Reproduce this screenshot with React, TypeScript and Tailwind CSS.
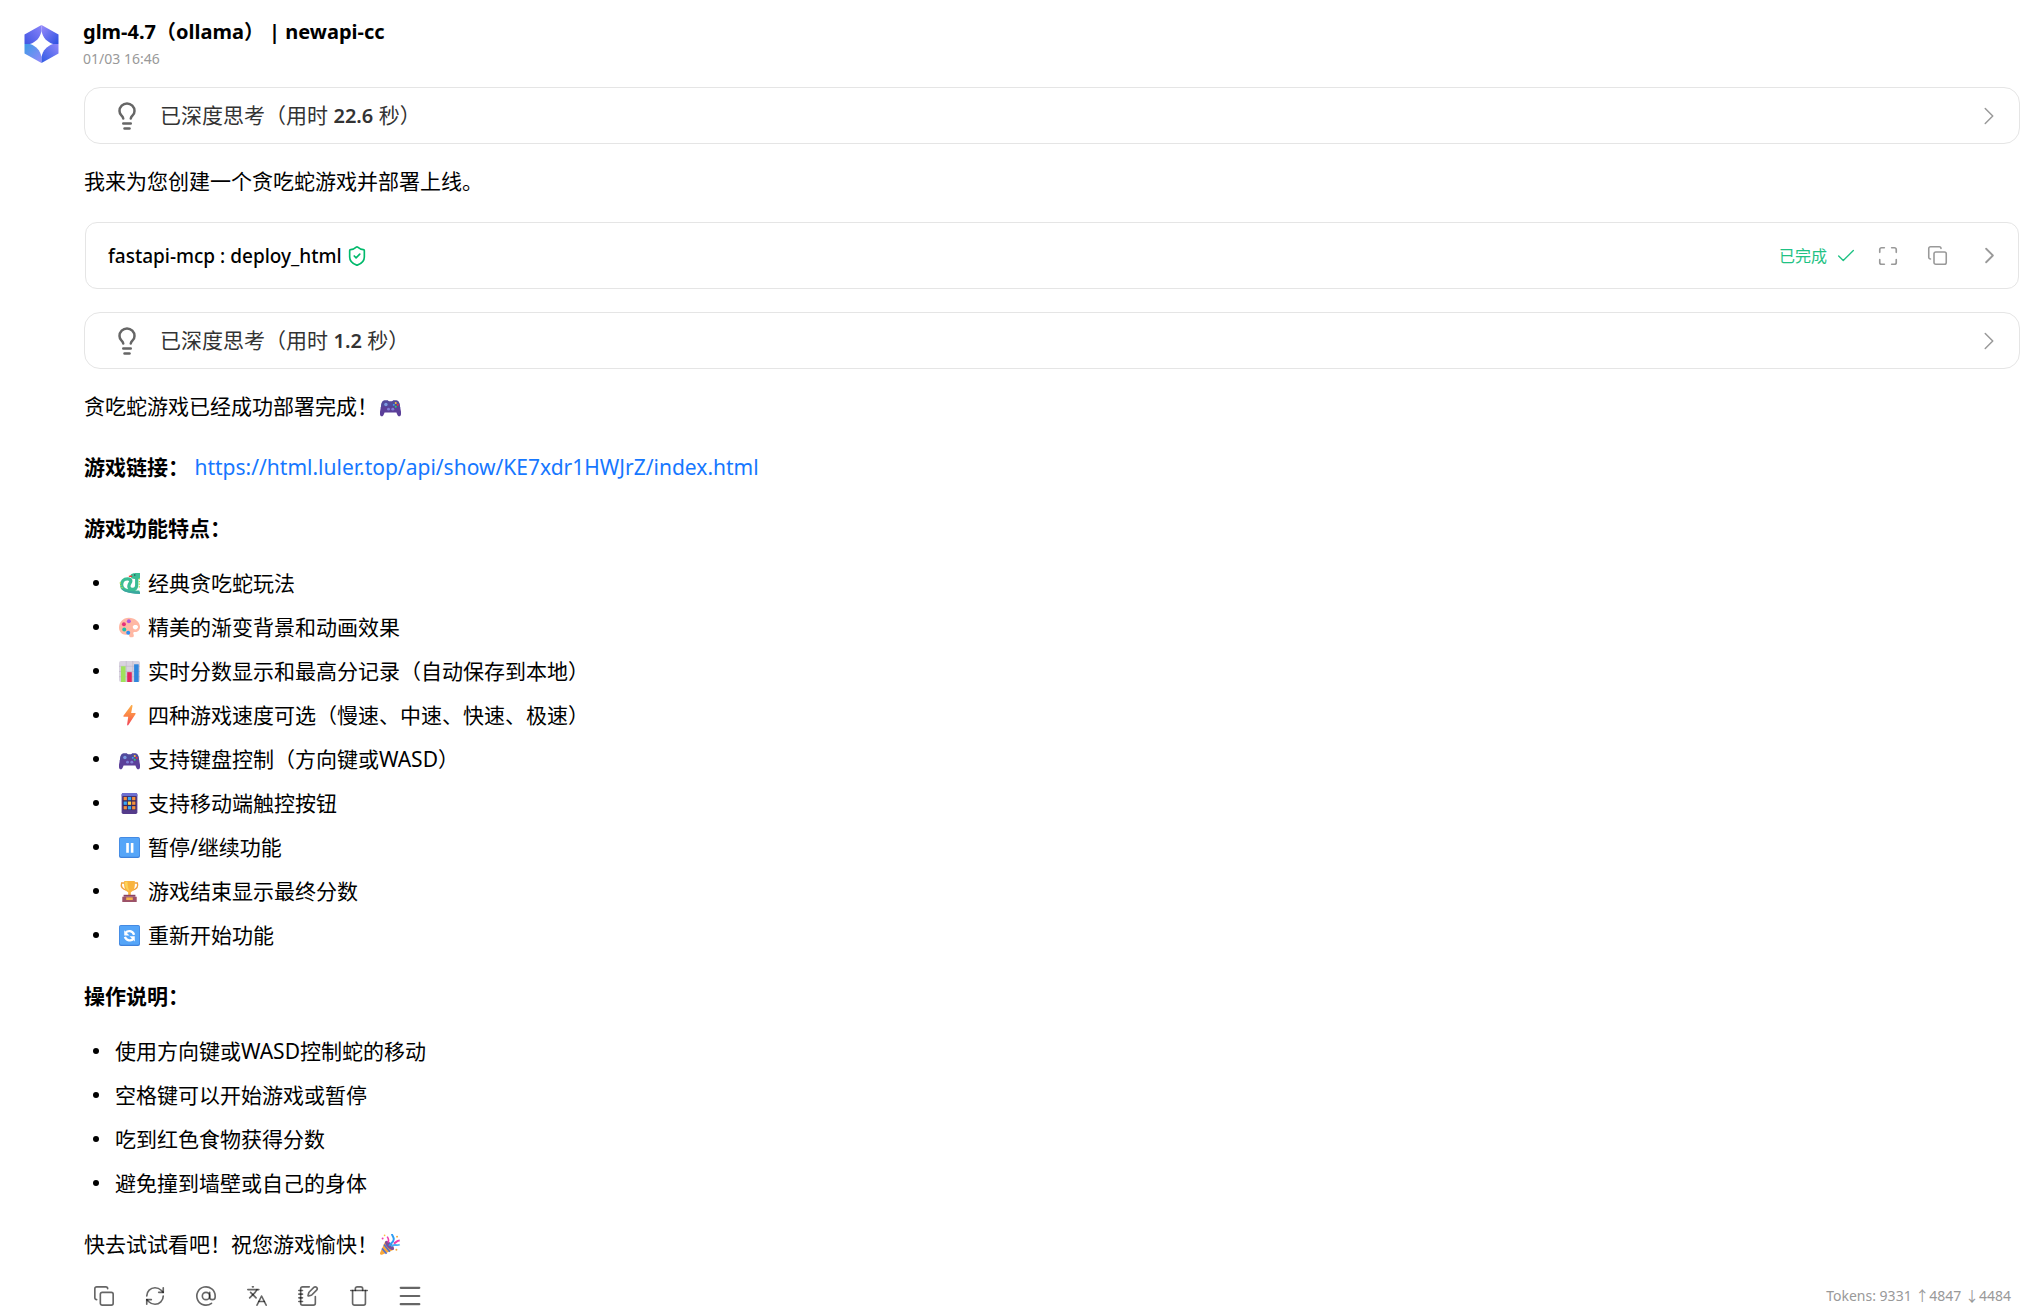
import type { ReactNode } from "react";
import {
  AtSign,
  Check,
  ChevronRight,
  Copy,
  Languages,
  Lightbulb,
  Maximize,
  Menu,
  NotebookPen,
  RefreshCw,
  ShieldCheck,
  Trash,
} from "lucide-react";

function Emoji({ label, children }: { label: string; children: ReactNode }) {
  return (
    <svg viewBox="0 0 32 32" role="img" aria-label={label} className="h-[21px] w-[21px] shrink-0">
      {children}
    </svg>
  );
}

function GamepadEmoji() {
  return (
    <Emoji label="gamepad">
      <path d="M7 7h5l1.500 1.500h5L20 7h5c2.500 0 4 2 4.800 5L32 24c.5 4-.5 7-2.500 7-2 0-3-2-4.500-6H7c-1.500 4-2.500 6-4.500 6C.5 31-.5 28 0 24L2.200 12C3 9 4.500 7 7 7Z" fill="#5b3f99" />
      <path d="M1 19l1.200-7C3 9 4.500 7 7 7h5l1.500 1.500h5L20 7h5c2.500 0 4 2 4.800 5l1.200 7c-2-5-9-3-15-3S3 14 1 19Z" fill="#514a9c" />
      <circle cx="9" cy="13" r="2.600" fill="#7c9ae0" />
      <circle cx="13" cy="20" r="2.200" fill="#7f7fd8" />
      <circle cx="19.500" cy="20" r="2.200" fill="#7f7fd8" />
      <circle cx="24" cy="10.500" r="1.500" fill="#f9c23c" />
      <circle cx="21" cy="13.500" r="1.500" fill="#3fa9f5" />
      <circle cx="27" cy="13.500" r="1.500" fill="#f8312f" />
      <circle cx="24" cy="16.500" r="1.500" fill="#2ecc71" />
    </Emoji>
  );
}

function SnakeEmoji() {
  return (
    <Emoji label="snake">
      <path d="M27 5v13c0 5-2 7-6 7s-6-2-6-5c0-4 3-5 3-8 0-2-2-3-5-3-6 0-9 4-9 9 0 7 8 11 27 11" fill="none" stroke="#3bbd94" strokeWidth="5" />
      <path d="M17 4c2-4 7-4 11-4h4v9h-8c-4 0-6-2-7-5Z" fill="#3bbd94" />
      <path d="M2 22c3 6 12 9 30 10v-4c-15 0-24-1-30-6Z" fill="#3ba6a0" />
      <path d="M31 8v14M2 14c0 4 1 7 4 10" stroke="#b6dc52" strokeWidth="2" strokeDasharray="2 2" fill="none" />
      <path d="m20 5-5 0" stroke="#f8312f" strokeWidth="2" />
      <circle cx="24" cy="3" r="1" fill="#234" />
    </Emoji>
  );
}

function PaletteEmoji() {
  return (
    <Emoji label="palette">
      <path d="M15 1C6 1 0 8 0 16c0 7 5 11 10 11 3 0 4-2 5 0s0 4 5 4c3 0 3-3 2-5s0-3 3-3c5 0 7-4 7-8C32 7 24 1 15 1Zm10 11c2 0 4 1 4 3s-2 4-4 4-4-1-4-4c0-2 2-3 4-3Z" fill="#ffb8a4" fillRule="evenodd" />
      <circle cx="15" cy="6.500" r="3" fill="#b256e0" />
      <circle cx="7.500" cy="11" r="3" fill="#e6307c" />
      <circle cx="8" cy="19" r="3" fill="#1fbfa8" />
      <circle cx="14" cy="24" r="3" fill="#2f8ff0" />
    </Emoji>
  );
}

function ChartEmoji() {
  return (
    <Emoji label="chart">
      <rect width="32" height="32" rx="3" fill="#d9d3e0" />
      <path d="M0 8h32M0 16h32M0 24h32M11 0v32M21 0v32" stroke="#bdb6c8" />
      <rect x="3" y="8" width="7" height="24" fill="#9fe25c" />
      <rect x="12.500" y="17" width="7" height="15" fill="#e2265e" />
      <rect x="23" y="5" width="7" height="27" fill="#2f86dc" />
    </Emoji>
  );
}

function BoltEmoji() {
  return (
    <Emoji label="bolt">
      <defs>
        <linearGradient id="bolt" x1="0" y1="0" x2="0" y2="1">
          <stop offset="0" stopColor="#fcb04a" />
          <stop offset=".55" stopColor="#fb8148" />
          <stop offset="1" stopColor="#f0415a" />
        </linearGradient>
      </defs>
      <path d="M18 1c1-2 3-1 2.500 1L18.500 12H24c1.500 0 2 1 1 2L14.500 30c-1 2-2.500 1-2 -1l1.500-11H8c-1.500 0-1.500-1-1-2Z" fill="url(#bolt)" />
    </Emoji>
  );
}

function PhoneEmoji() {
  return (
    <Emoji label="phone">
      <rect x="4" width="24" height="32" rx="2.500" fill="#553c8b" />
      <path d="M4 5V2.500C4 1 5 0 6.500 0h19C27 0 28 1 28 2.500V5Z" fill="#6d6fd0" />
      <rect x="6" y="5" width="20" height="21" fill="#35285e" />
      <g fill="#f7913d">
        <rect x="7" y="6" width="5" height="5" />
        <rect x="20" y="6" width="5" height="5" />
        <rect x="13.500" y="13" width="5" height="5" fill="#ffd347" />
        <rect x="7" y="20" width="5" height="5" />
        <rect x="20" y="20" width="5" height="5" />
      </g>
      <g fill="#38a9f5">
        <rect x="13.500" y="6" width="5" height="5" />
        <rect x="7" y="13" width="5" height="5" />
        <rect x="20" y="13" width="5" height="5" fill="#f7913d" />
        <rect x="13.500" y="20" width="5" height="5" />
      </g>
    </Emoji>
  );
}

function KeycapBase() {
  return (
    <>
      <rect width="32" height="32" rx="3" fill="#3f82dc" />
      <rect x="1" y="1" width="30" height="29" rx="2.500" fill="#55a5f8" />
    </>
  );
}

function PauseEmoji() {
  return (
    <Emoji label="pause">
      <KeycapBase />
      <path d="M11 9h4v15h-4zM18 9h4v15h-4z" fill="#fff" />
    </Emoji>
  );
}

function RestartEmoji() {
  return (
    <Emoji label="restart">
      <KeycapBase />
      <path d="M10 12c3-4 11-4 13 3M22 21c-3 4-11 3-13-3" fill="none" stroke="#fff" strokeWidth="3.500" />
      <path d="M8 8v8h8zM24 25v-8h-8z" fill="#fff" />
    </Emoji>
  );
}

function TrophyEmoji() {
  return (
    <Emoji label="trophy">
      <path d="M9 3H4c-2 6 1 9 7 11M23 3h5c2 6-1 9-7 11" fill="none" stroke="#f0a03c" strokeWidth="2" />
      <path d="M8 0h16c1 9-1 15-6 17v5h-4v-5C9 15 7 9 8 0Z" fill="#f9b43f" />
      <path d="M9 1h4c0 7 1 11 3 14C11 14 9 8 9 1Z" fill="#fdd259" />
      <path d="M7 21h18v3H7z" fill="#8a4463" />
      <path d="M5 24h22v8H5z" fill="#9c5268" />
      <rect x="11" y="25" width="10" height="4" fill="#f6b24a" />
    </Emoji>
  );
}

function PartyEmoji() {
  return (
    <Emoji label="party">
      <path d="M8 11 0 29c-.5 2 1 3 3 2.500L21 24Z" fill="#f9a83a" />
      <path d="m6 16 9 11M3 22l7 8" stroke="#4e6fd0" strokeWidth="2.500" />
      <ellipse cx="14.500" cy="17.500" rx="4" ry="9" transform="rotate(-44 14.500 17.500)" fill="#7b4f9c" />
      <path d="M14 18c2-4 7-5 7-10 0-3-2-5-3-8" fill="none" stroke="#2f9df4" strokeWidth="3" />
      <path d="M17 19c4-5 8 0 13-3" fill="none" stroke="#4ab0f5" strokeWidth="3" />
      <path d="M21 14c3 0 4-4 9-4" fill="none" stroke="#ee3fae" strokeWidth="3" />
      <path d="M12 13c2-3 1-6-1-9" fill="none" stroke="#ee3fae" strokeWidth="2.500" />
      <circle cx="4" cy="7" r="1.500" fill="#ee3fae" />
      <circle cx="26" cy="4" r="1.500" fill="#f9a83a" />
      <circle cx="25" cy="24" r="1.500" fill="#f9a83a" />
      <circle cx="7" cy="2" r="1.300" fill="#f9c23c" />
    </Emoji>
  );
}

function Avatar() {
  return (
    <svg viewBox="0 0 36 40" role="img" aria-label="glm" className="mt-6 h-10 w-9 shrink-0">
      <defs>
        <linearGradient id="a1" x1="0" y1="1" x2="1" y2="0">
          <stop offset="0" stopColor="#3f55e2" />
          <stop offset="1" stopColor="#8a84fa" />
        </linearGradient>
        <linearGradient id="a2" x1="0" y1="0" x2="1" y2="1">
          <stop offset="0" stopColor="#9a8cfb" />
          <stop offset="1" stopColor="#2a4fe0" />
        </linearGradient>
        <linearGradient id="a3" x1="0" y1="0" x2="1" y2="1">
          <stop offset="0" stopColor="#3d9be6" />
          <stop offset="1" stopColor="#9488fa" />
        </linearGradient>
        <linearGradient id="a4" x1="1" y1="0" x2="0" y2="1">
          <stop offset="0" stopColor="#8f86fa" />
          <stop offset="1" stopColor="#2f5be3" />
        </linearGradient>
      </defs>
      <path d="M18.500 1 1.500 10.500V20H7c6-2 10-6 11.500-13Z" fill="url(#a1)" />
      <path d="m18.500 1 17 9.500V20H30C24 18 20 14 18.500 7Z" fill="url(#a2)" />
      <path d="M1.500 20v9.500l17 9.500v-6C17 26 13 22 7 20Z" fill="url(#a3)" />
      <path d="M35.500 20v9.500l-17 9.500v-6C20 26 24 22 30 20Z" fill="url(#a4)" />
    </svg>
  );
}

function ThinkingBlock({ seconds }: { seconds: string }) {
  return (
    <button
      type="button"
      className="flex h-[57px] w-full items-center rounded-2xl border border-[#e5e5e5] pl-[27px] pr-[15px] text-left text-[#333]"
    >
      <Lightbulb size={30} strokeWidth={2} className="shrink-0 text-[#666]" />
      <span className="ml-[18px] grow">
        已深度思考（用时 <span className="text-[20px] font-semibold">{seconds}</span> 秒）
      </span>
      <ChevronRight size={30} strokeWidth={1.2} className="text-[#999]" />
    </button>
  );
}

function ToolBlock() {
  return (
    <div className="mx-px flex h-[67px] items-center rounded-xl border border-[#e5e5e5] pl-[22px] pr-[15px]">
      <span className="text-[19px] font-medium">fastapi-mcp : deploy_html</span>
      <ShieldCheck size={22} strokeWidth={1.8} className="ml-1 text-[#00b96b]" />
      <span className="ml-auto text-[16px] text-[#1fc284]">已完成</span>
      <Check size={22} strokeWidth={1.5} className="ml-2 text-[#1fc284]" />
      <button type="button" aria-label="expand" className="ml-5 text-[#999]">
        <Maximize size={22} strokeWidth={1.8} />
      </button>
      <button type="button" aria-label="copy" className="ml-7 text-[#999]">
        <Copy size={21} strokeWidth={1.8} />
      </button>
      <button type="button" aria-label="details" className="ml-7 text-[#999]">
        <ChevronRight size={27} strokeWidth={1.6} />
      </button>
    </div>
  );
}

const features = [
  { icon: <SnakeEmoji />, text: "经典贪吃蛇玩法" },
  { icon: <PaletteEmoji />, text: "精美的渐变背景和动画效果" },
  { icon: <ChartEmoji />, text: "实时分数显示和最高分记录（自动保存到本地）" },
  { icon: <BoltEmoji />, text: "四种游戏速度可选（慢速、中速、快速、极速）" },
  { icon: <GamepadEmoji />, text: "支持键盘控制（方向键或WASD）" },
  { icon: <PhoneEmoji />, text: "支持移动端触控按钮" },
  { icon: <PauseEmoji />, text: "暂停/继续功能" },
  { icon: <TrophyEmoji />, text: "游戏结束显示最终分数" },
  { icon: <RestartEmoji />, text: "重新开始功能" },
];

const controls = [
  "使用方向键或WASD控制蛇的移动",
  "空格键可以开始游戏或暂停",
  "吃到红色食物获得分数",
  "避免撞到墙壁或自己的身体",
];

const actions = [
  { label: "copy", icon: <Copy size={22} strokeWidth={1.8} /> },
  { label: "regenerate", icon: <RefreshCw size={22} strokeWidth={1.8} /> },
  { label: "mention", icon: <AtSign size={22} strokeWidth={1.8} /> },
  { label: "translate", icon: <Languages size={22} strokeWidth={1.8} /> },
  { label: "notes", icon: <NotebookPen size={22} strokeWidth={1.8} /> },
  { label: "delete", icon: <Trash size={22} strokeWidth={1.8} /> },
  { label: "menu", icon: <Menu size={28} strokeWidth={1.8} /> },
];

function Bullet({ icon, children }: { icon?: ReactNode; children: ReactNode }) {
  return (
    <li className="flex items-center">
      <span className="ml-[9px] mr-4 size-[6px] rounded-full bg-black" />
      {icon && <span className="ml-1 mr-2 flex">{icon}</span>}
      {children}
    </li>
  );
}

export default function App() {
  return (
    <main className="flex min-h-screen gap-6 bg-white pl-[23px] pr-[15px] font-['Noto_Sans','Noto_Sans_CJK_SC',sans-serif] text-[21px] leading-[34px] text-black">
      <Avatar />
      <article className="min-w-0 grow">
        <header className="pt-4">
          <h1 className="text-[20px] font-bold leading-8">glm-4.7（ollama） | newapi-cc</h1>
          <time className="block text-[14px] leading-[22px] text-[#999]">01/03 16:46</time>
        </header>

        <div className="mt-[17px] pl-px">
          <ThinkingBlock seconds="22.6" />
          <p className="mb-6 mt-5">我来为您创建一个贪吃蛇游戏并部署上线。</p>
          <ToolBlock />
          <div className="mt-[23px]">
            <ThinkingBlock seconds="1.2" />
          </div>

          <p className="mt-5 flex items-center gap-[2px]">
            贪吃蛇游戏已经成功部署完成！
            <GamepadEmoji />
          </p>
          <p className="mt-[27px]">
            <strong>游戏链接：</strong>{" "}
            <a href="https://html.luler.top/api/show/KE7xdr1HWJrZ/index.html" className="text-[#1677ff]">
              https://html.luler.top/api/show/KE7xdr1HWJrZ/index.html
            </a>
          </p>
          <h2 className="mt-[27px] font-bold">游戏功能特点：</h2>
          <ul className="mt-[21px] space-y-[10px]">
            {features.map((f) => (
              <Bullet key={f.text} icon={f.icon}>
                {f.text}
              </Bullet>
            ))}
          </ul>
          <h2 className="mt-[27px] font-bold">操作说明：</h2>
          <ul className="mt-[21px] space-y-[10px]">
            {controls.map((text) => (
              <Bullet key={text}>{text}</Bullet>
            ))}
          </ul>
          <p className="mt-[27px] flex items-center gap-[2px]">
            快去试试看吧！祝您游戏愉快！
            <PartyEmoji />
          </p>
        </div>

        <footer className="mt-[17px] flex items-center justify-between">
          <div className="flex gap-4 pl-[3px]">
            {actions.map((a) => (
              <button
                key={a.label}
                type="button"
                aria-label={a.label}
                className="flex size-[35px] items-center justify-center text-black/60"
              >
                {a.icon}
              </button>
            ))}
          </div>
          <span className="pr-[9px] text-[14px] leading-5 text-[#999]">Tokens: 9331 ↑4847 ↓4484</span>
        </footer>
      </article>
    </main>
  );
}
